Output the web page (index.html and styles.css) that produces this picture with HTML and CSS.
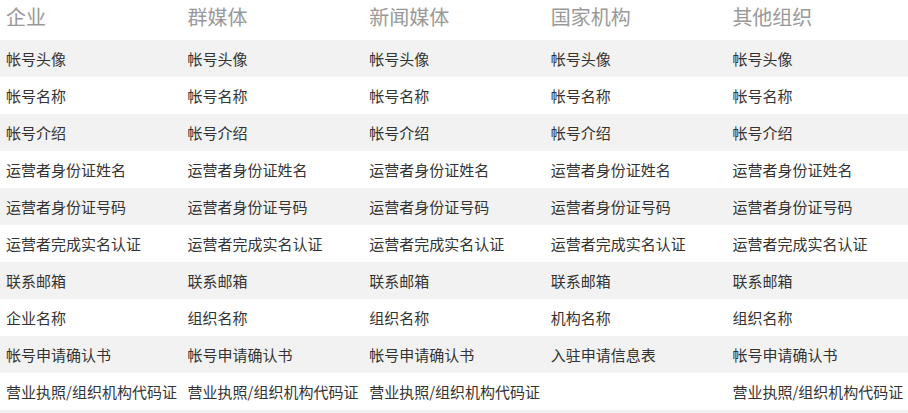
FILE: index.html
```html
<!DOCTYPE html>
<html lang="zh-CN">
<head>
<meta charset="utf-8">
<title>帐号信息</title>
<link rel="stylesheet" href="styles.css">
</head>
<body>
<table class="grid">
  <thead>
    <tr>
      <th>企业</th><th>群媒体</th><th>新闻媒体</th><th>国家机构</th><th>其他组织</th>
    </tr>
  </thead>
  <tbody>
    <tr><td>帐号头像</td><td>帐号头像</td><td>帐号头像</td><td>帐号头像</td><td>帐号头像</td></tr>
    <tr><td>帐号名称</td><td>帐号名称</td><td>帐号名称</td><td>帐号名称</td><td>帐号名称</td></tr>
    <tr><td>帐号介绍</td><td>帐号介绍</td><td>帐号介绍</td><td>帐号介绍</td><td>帐号介绍</td></tr>
    <tr><td>运营者身份证姓名</td><td>运营者身份证姓名</td><td>运营者身份证姓名</td><td>运营者身份证姓名</td><td>运营者身份证姓名</td></tr>
    <tr><td>运营者身份证号码</td><td>运营者身份证号码</td><td>运营者身份证号码</td><td>运营者身份证号码</td><td>运营者身份证号码</td></tr>
    <tr><td>运营者完成实名认证</td><td>运营者完成实名认证</td><td>运营者完成实名认证</td><td>运营者完成实名认证</td><td>运营者完成实名认证</td></tr>
    <tr><td>联系邮箱</td><td>联系邮箱</td><td>联系邮箱</td><td>联系邮箱</td><td>联系邮箱</td></tr>
    <tr><td>企业名称</td><td>组织名称</td><td>组织名称</td><td>机构名称</td><td>组织名称</td></tr>
    <tr><td>帐号申请确认书</td><td>帐号申请确认书</td><td>帐号申请确认书</td><td>入驻申请信息表</td><td>帐号申请确认书</td></tr>
    <tr><td>营业执照/组织机构代码证</td><td>营业执照/组织机构代码证</td><td>营业执照/组织机构代码证</td><td></td><td>营业执照/组织机构代码证</td></tr>
    <tr><td></td><td></td><td></td><td></td><td></td></tr>
  </tbody>
</table>
</body>
</html>
```

FILE: styles.css
```css
html, body {
  margin: 0;
  padding: 0;
  background: #ffffff;
}

body {
  font-family: "Noto Sans CJK SC", "Noto Sans", sans-serif;
  color: #333333;
}

.grid {
  width: 100%;
  table-layout: fixed;
  border-collapse: collapse;
  border-spacing: 0;
}

.grid th {
  height: 40px;
  padding: 0 6px 6px;
  font-size: 20px;
  font-weight: normal;
  color: #999999;
  text-align: left;
  white-space: nowrap;
  line-height: 28px;
  box-sizing: border-box;
}

.grid td {
  height: 37px;
  padding: 0 6px;
  font-size: 15px;
  line-height: 20px;
  text-align: left;
  white-space: nowrap;
  box-sizing: border-box;
}

.grid tbody tr:nth-child(odd) {
  background: #f2f2f2;
}
```
